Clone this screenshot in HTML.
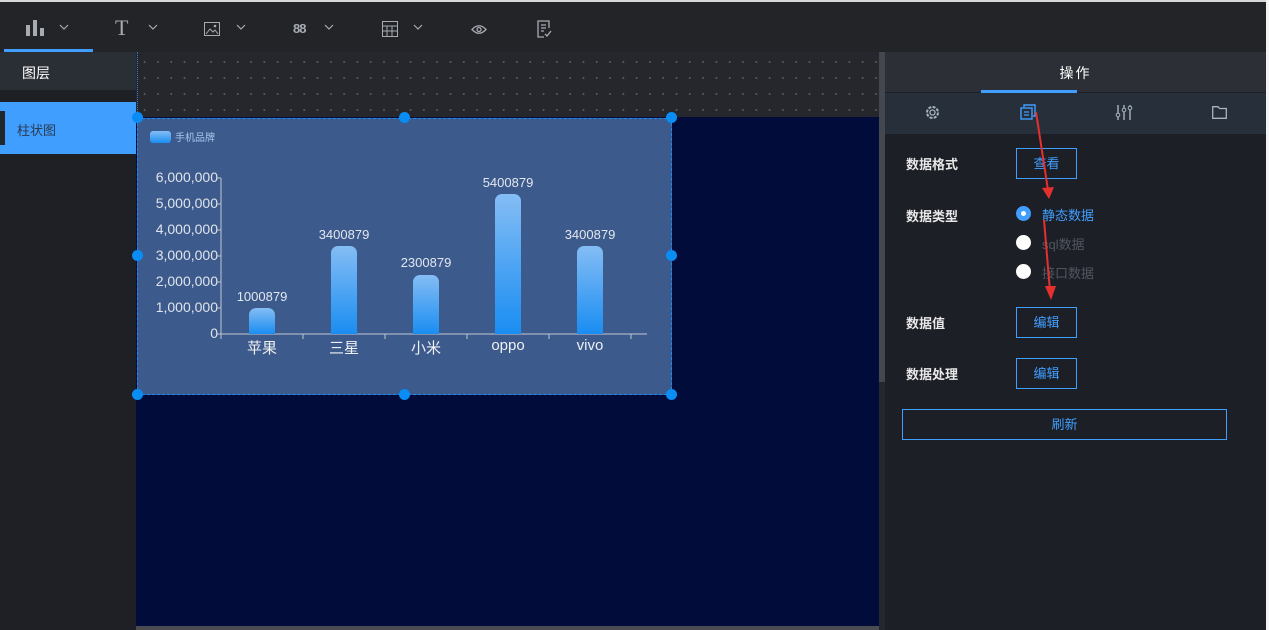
<!DOCTYPE html>
<html><head><meta charset="utf-8"><style>
*{margin:0;padding:0;box-sizing:border-box}
body{width:1269px;height:630px;overflow:hidden;background:#1e2026;font-family:"Liberation Sans","Noto Sans CJK SC",sans-serif;position:relative}
.abs{position:absolute}
.top{left:0;top:0;width:1269px;height:52px;background:#222428;border-top:2px solid #d8d8d8}
.ico{position:absolute;top:16px;color:#a7abb2}
.chev{position:absolute;top:22px}
.btn{position:absolute;border:1px solid #409eff;color:#409eff;font-size:13px;text-align:center;background:transparent}
.lbl{position:absolute;color:#e8e8e8;font-size:13px;font-weight:bold}
.radio{position:absolute;width:15px;height:15px;border-radius:50%;background:#fff}
.h{position:absolute;width:11px;height:11px;border-radius:50%;background:#0a8cf5}
.yl{position:absolute;right:0;color:#e0e4ec;font-size:14px}
.bar{position:absolute;width:26px;border-radius:7px 7px 0 0;background:linear-gradient(#84bdf4,#1a8df2)}
.vl{position:absolute;color:#e3e8f0;font-size:13px;text-align:center;width:80px}
.xl{position:absolute;color:#eef0f4;font-size:15px;text-align:center;width:80px;top:337px}
</style></head><body>
<div class="abs top">
 <svg class="ico" style="left:25px;top:17px" width="20" height="18"><rect x="1" y="6" width="4" height="11" fill="#a7abb2"/><rect x="8" y="1" width="4" height="16" fill="#a7abb2"/><rect x="15" y="9" width="4" height="8" fill="#a7abb2"/></svg>
 <svg class="chev" style="left:59px" width="10" height="6"><path d="M1 1l4 4 4-4" fill="none" stroke="#a7abb2" stroke-width="1.2"/></svg>
 <div class="abs" style="left:4px;top:47px;width:89px;height:3px;background:#409eff"></div>
 <span class="ico" style="left:115px;top:13px;font-size:22px;font-family:'Liberation Serif',serif">T</span>
 <svg class="chev" style="left:148px" width="10" height="6"><path d="M1 1l4 4 4-4" fill="none" stroke="#a7abb2" stroke-width="1.2"/></svg>
 <svg class="ico" style="left:204px;top:20px" width="16" height="14"><rect x="0.5" y="0.5" width="15" height="13" fill="none" stroke="#a7abb2"/><path d="M2 12l4-5 3 3 2-2 3 4" fill="none" stroke="#a7abb2"/><circle cx="11" cy="4" r="1.3" fill="#a7abb2"/></svg>
 <svg class="chev" style="left:236px" width="10" height="6"><path d="M1 1l4 4 4-4" fill="none" stroke="#a7abb2" stroke-width="1.2"/></svg>
 <span class="ico" style="left:293px;top:19px;font-size:13px;font-weight:bold;letter-spacing:-1px">88</span>
 <svg class="chev" style="left:324px" width="10" height="6"><path d="M1 1l4 4 4-4" fill="none" stroke="#a7abb2" stroke-width="1.2"/></svg>
 <svg class="ico" style="left:382px;top:19px" width="16" height="16"><rect x="0.5" y="0.5" width="15" height="15" fill="none" stroke="#a7abb2"/><path d="M0 5H16M0 10H16M5 5V16M10 5V16" stroke="#a7abb2"/></svg>
 <svg class="chev" style="left:413px" width="10" height="6"><path d="M1 1l4 4 4-4" fill="none" stroke="#a7abb2" stroke-width="1.2"/></svg>
 <svg class="ico" style="left:471px;top:22px" width="16" height="11"><path d="M1 5.5Q8 -2 15 5.5Q8 13 1 5.5Z" fill="none" stroke="#a7abb2" stroke-width="1.3"/><circle cx="8" cy="5.5" r="2" fill="none" stroke="#a7abb2" stroke-width="1.3"/></svg>
 <svg class="ico" style="left:537px;top:18px" width="15" height="18"><path d="M12 8V1H1V17H7" fill="none" stroke="#a7abb2" stroke-width="1.3"/><path d="M4 5H9M4 8H9M4 11H7M8 14l2 2 4-5" fill="none" stroke="#a7abb2" stroke-width="1.3"/></svg>
</div>
<!-- left panel -->
<div class="abs" style="left:0;top:52px;width:136px;height:38px;background:#2a2e35;color:#fff;font-size:14px;padding:11px 0 0 22px">图层</div>
<div class="abs" style="left:0;top:102px;width:136px;height:52px;background:#409eff;color:#2a3a50;font-size:13px;padding:18px 0 0 17px">柱状图</div>
<div class="abs" style="left:0;top:111px;width:5px;height:34px;background:#22262d"></div>
<!-- canvas -->
<div class="abs" style="left:136px;top:52px;width:743px;height:66px;background-color:#25272c;background-image:radial-gradient(circle,#555a63 0.8px,transparent 1.2px);background-size:13.3px 16px;background-position:2px 2px"></div>
<div class="abs" style="left:136px;top:117px;width:743px;height:513px;background:#020c3a"></div>
<div class="abs" style="left:137px;top:52px;width:1px;height:66px;border-left:1px dotted #2a7fd0"></div>
<div class="abs" style="left:136px;top:626px;width:743px;height:4px;background:#4a4c52"></div>
<div class="abs" style="left:879px;top:52px;width:6px;height:578px;background:#25272c"></div>
<div class="abs" style="left:879px;top:52px;width:6px;height:330px;background:#44474e"></div>
<!-- chart -->
<div class="abs" style="left:137px;top:118px;width:535px;height:277px;background:#3c5a8c;border:1px dashed #1a8df5"></div>
<div class="abs" style="left:150px;top:131px;width:21px;height:12px;border-radius:3px;background:linear-gradient(#84bdf4,#1a8df2)"></div>
<div class="abs" style="left:175px;top:129px;color:#a9c6ec;font-size:10px">手机品牌</div>
<div class="abs" style="left:140px;top:0;width:78px;height:0">
 <div class="yl" style="top:169px">6,000,000</div><div class="yl" style="top:195px">5,000,000</div><div class="yl" style="top:221px">4,000,000</div><div class="yl" style="top:247px">3,000,000</div><div class="yl" style="top:273px">2,000,000</div><div class="yl" style="top:299px">1,000,000</div><div class="yl" style="top:325px">0</div>
</div>
<svg class="abs" style="left:215px;top:175px" width="435" height="165"><path d="M6 3V160M6 3H2M6 29H2M6 55H2M6 81H2M6 107H2M6 133H2M6 159H2M6 159H432M88 159V164M170 159V164M252 159V164M334 159V164M416 159V164M6 159V164" stroke="#c2c8d2" stroke-width="1" fill="none"/></svg>
<div class="bar" style="left:249px;top:308px;height:26px"></div>
<div class="bar" style="left:331px;top:246px;height:88px"></div>
<div class="bar" style="left:413px;top:275px;height:59px"></div>
<div class="bar" style="left:495px;top:194px;height:140px"></div>
<div class="bar" style="left:577px;top:246px;height:88px"></div>
<div class="vl" style="left:222px;top:289px">1000879</div>
<div class="vl" style="left:304px;top:227px">3400879</div>
<div class="vl" style="left:386px;top:255px">2300879</div>
<div class="vl" style="left:468px;top:175px">5400879</div>
<div class="vl" style="left:550px;top:227px">3400879</div>
<div class="xl" style="left:222px">苹果</div><div class="xl" style="left:304px">三星</div><div class="xl" style="left:386px">小米</div><div class="xl" style="left:468px">oppo</div><div class="xl" style="left:550px">vivo</div>
<div class="h" style="left:132px;top:112px"></div><div class="h" style="left:399px;top:112px"></div><div class="h" style="left:666px;top:112px"></div>
<div class="h" style="left:132px;top:250px"></div><div class="h" style="left:666px;top:250px"></div>
<div class="h" style="left:132px;top:389px"></div><div class="h" style="left:399px;top:389px"></div><div class="h" style="left:666px;top:389px"></div>
<!-- right panel -->
<div class="abs" style="left:885px;top:52px;width:381px;height:40px;background:#2c3036;color:#fff;font-size:14px;text-align:center;padding-top:11px;letter-spacing:2px">操作</div>
<div class="abs" style="left:981px;top:90px;width:96px;height:3px;background:#409eff"></div>
<div class="abs" style="left:885px;top:93px;width:381px;height:41px;background:#27303a"></div>
<div class="abs" style="left:885px;top:134px;width:381px;height:496px;background:#1d1f26"></div>
<div class="abs" style="left:1266px;top:0;width:3px;height:630px;background:#f4f4f4"></div>
<svg class="abs" style="left:925px;top:105px" width="15" height="15"><circle cx="7.5" cy="7.5" r="5.5" fill="none" stroke="#a8b4c2" stroke-width="2" stroke-dasharray="3 1.3"/><circle cx="7.5" cy="7.5" r="2.5" fill="none" stroke="#a8b4c2" stroke-width="1.3"/></svg>
<svg class="abs" style="left:1020px;top:104px" width="16" height="16"><path d="M4 3V1H15V12H13" fill="none" stroke="#409eff" stroke-width="1.4"/><rect x="1" y="4" width="11" height="11" fill="none" stroke="#409eff" stroke-width="1.4"/><path d="M4 8H9M4 11H9" stroke="#409eff" stroke-width="1.2"/></svg>
<svg class="abs" style="left:1115px;top:104px" width="18" height="17"><path d="M3 1V16M9 1V16M15 1V16" stroke="#a8b4c2" stroke-width="1.4"/><circle cx="3" cy="11" r="1.8" fill="#27303a" stroke="#a8b4c2"/><circle cx="9" cy="6" r="1.8" fill="#27303a" stroke="#a8b4c2"/><circle cx="15" cy="4" r="1.8" fill="#27303a" stroke="#a8b4c2"/></svg>
<svg class="abs" style="left:1212px;top:106px" width="15" height="13"><path d="M0.7 0.7H6L7.5 2.5H14.3V12.3H0.7Z" fill="none" stroke="#a8b4c2" stroke-width="1.3"/></svg>
<div class="lbl" style="left:906px;top:154px">数据格式</div>
<div class="btn" style="left:1016px;top:148px;width:61px;height:31px;line-height:29px">查看</div>
<div class="lbl" style="left:906px;top:206px">数据类型</div>
<div class="radio" style="left:1016px;top:206px;background:#409eff"></div><div class="abs" style="left:1021px;top:211px;width:5px;height:5px;border-radius:50%;background:#fff"></div>
<div class="abs" style="left:1042px;top:205px;color:#409eff;font-size:13px">静态数据</div>
<div class="radio" style="left:1016px;top:235px"></div><div class="abs" style="left:1042px;top:234px;color:#505560;font-size:13px">sql数据</div>
<div class="radio" style="left:1016px;top:264px"></div><div class="abs" style="left:1042px;top:263px;color:#505560;font-size:13px">接口数据</div>
<div class="lbl" style="left:906px;top:313px">数据值</div>
<div class="btn" style="left:1016px;top:307px;width:61px;height:31px;line-height:29px">编辑</div>
<div class="lbl" style="left:906px;top:364px">数据处理</div>
<div class="btn" style="left:1016px;top:358px;width:61px;height:31px;line-height:29px">编辑</div>
<div class="btn" style="left:902px;top:409px;width:325px;height:31px;line-height:29px">刷新</div>
<!-- red arrows -->
<svg class="abs" style="left:1020px;top:110px" width="50" height="200"><path d="M16 2L28 80" stroke="#e53030" stroke-width="2"/><path d="M22 78L29 89L34 77Z" fill="#e53030"/><path d="M24 110L30 181" stroke="#e53030" stroke-width="2"/><path d="M25 176L31 190L36 176Z" fill="#e53030"/></svg>
</body></html>
